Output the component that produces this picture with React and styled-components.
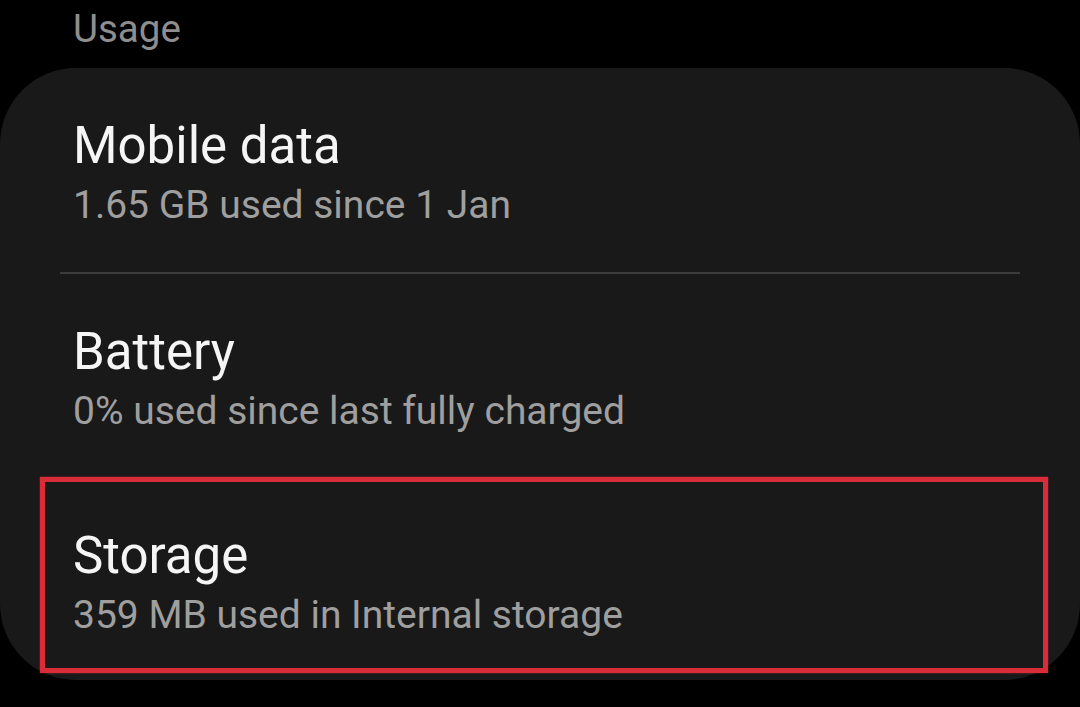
import React from 'react'
import styled, { createGlobalStyle } from 'styled-components'

const GlobalStyle = createGlobalStyle`
  html, body {
    margin: 0;
    padding: 0;
    background: #000;
  }
  body {
    font-family: Roboto, "Noto Sans", sans-serif;
    overflow: hidden;
  }
`

const items = [
  { title: 'Mobile data', sub: '1.65 GB used since 1 Jan' },
  { title: 'Battery', sub: '0% used since last fully charged' },
  { title: 'Storage', sub: '359 MB used in Internal storage', marked: true },
]

export default function App() {
  return (
    <Page>
      <GlobalStyle />
      <Header>Usage</Header>
      <Card>
        {items.map((item, i) => (
          <React.Fragment key={item.title}>
            {i === 1 && <Divider />}
            <Row>
              <Title>{item.title}</Title>
              <Sub>{item.sub}</Sub>
              {item.marked && <Highlight />}
            </Row>
          </React.Fragment>
        ))}
      </Card>
    </Page>
  )
}

const Page = styled.div`
  width: 1080px;
  height: 707px;
  background: #000;
`
const Header = styled.div`
  padding: 10px 0 0 73px;
  height: 38px;
  font-size: 38.5px;
  line-height: 38px;
  color: #8e8e8e;
  margin-bottom: 20px;
`
const Card = styled.div`
  background: #191919;
  border-radius: 76px;
  width: 1080px;
  display: flex;
  flex-direction: column;
`
const Row = styled.div`
  position: relative;
  box-sizing: border-box;
  height: 204px;
  padding: 53px 73px 0;
  display: flex;
  flex-direction: column;

  &:last-child {
    height: 202px;
  }
`
const Title = styled.div`
  font-size: 51px;
  line-height: 50px;
  color: #f5f5f5;
`
const Sub = styled.div`
  margin-top: 15px;
  font-size: 39px;
  line-height: 39px;
  color: #9f9f9f;
`
const Divider = styled.div`
  height: 2px;
  margin: 0 60px;
  background: #3c3c3c;
`
const Highlight = styled.div`
  position: absolute;
  left: 40px;
  right: 32px;
  top: -1px;
  height: 196px;
  box-sizing: border-box;
  border: 5px solid #d82d38;
  box-shadow: 0 0 2px rgba(216, 45, 56, 0.6);
  pointer-events: none;
`
